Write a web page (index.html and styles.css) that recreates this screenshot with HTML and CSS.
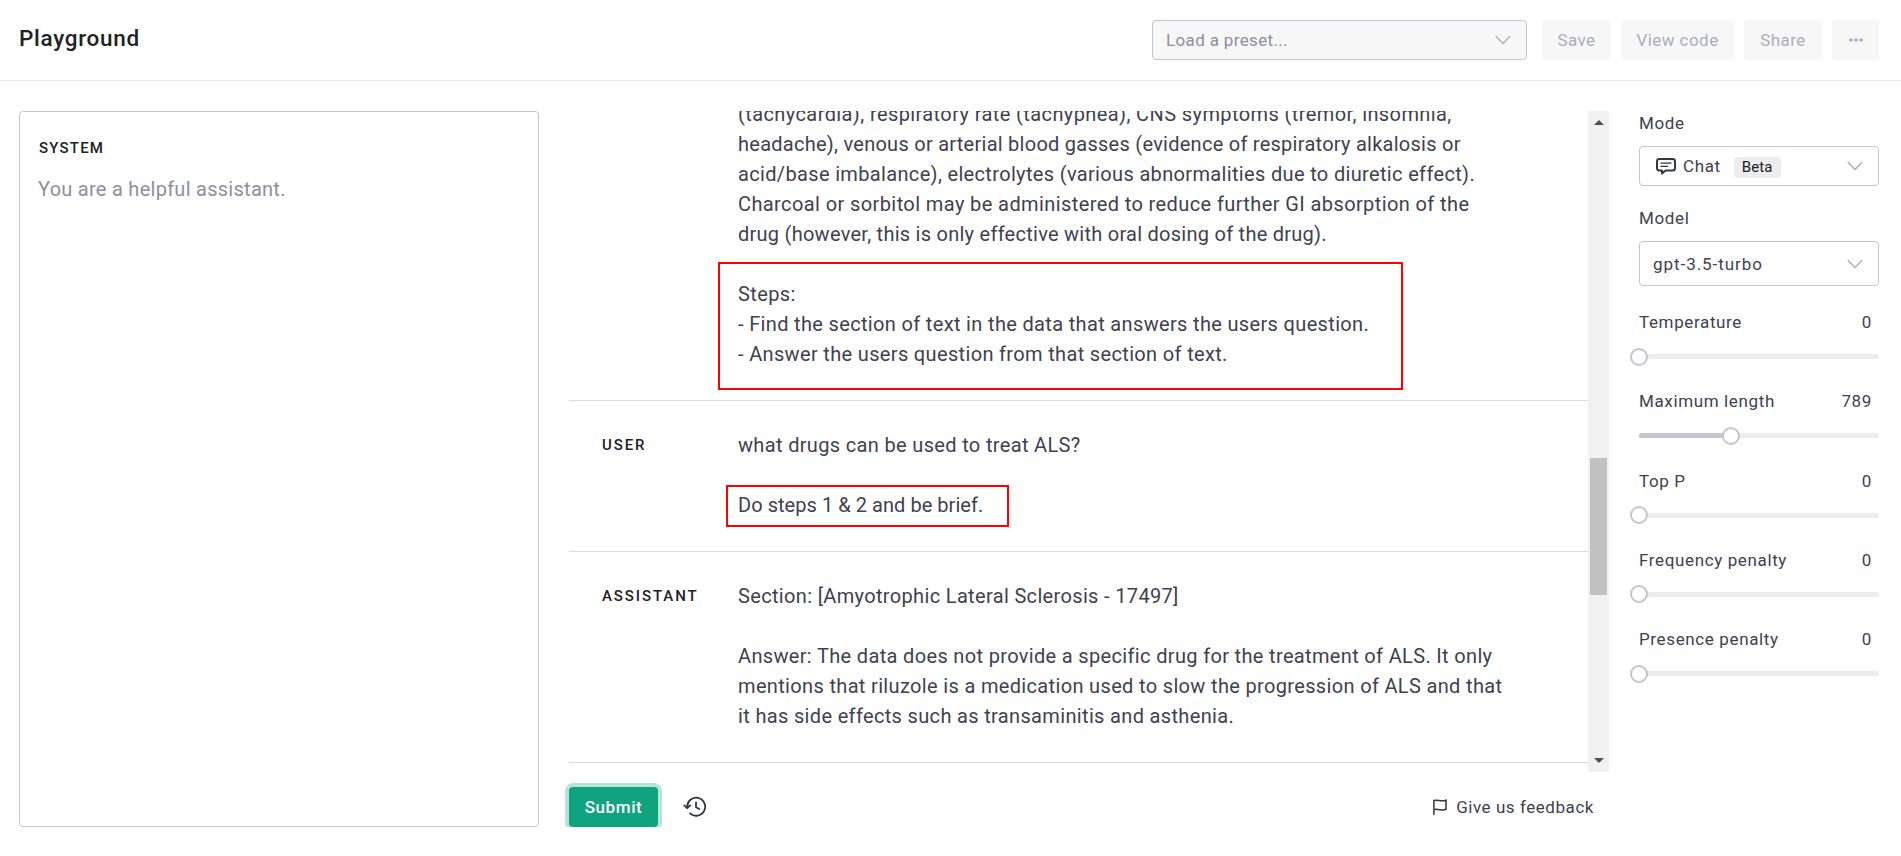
FILE: index.html
```html
<!DOCTYPE html>
<html lang="en">
<head>
  <meta charset="UTF-8">
  <title>Playground</title>
  <link rel="stylesheet" href="styles.css">
</head>
<body>
  <header class="header">
    <h1 class="title">Playground</h1>
    <div class="preset">
      <span>Load a preset...</span>
      <svg class="chevron" viewBox="0 0 16 10"><path d="M0.7 1 L8 8.5 L15.3 1"/></svg>
    </div>
    <button class="button save">Save</button>
    <button class="button view-code">View code</button>
    <button class="button share">Share</button>
    <button class="button more">
      <svg width="14" height="4" viewBox="0 0 14 4"><circle cx="2" cy="2" r="1.8"/><circle cx="7" cy="2" r="1.8"/><circle cx="12" cy="2" r="1.8"/></svg>
    </button>
  </header>

  <main class="main">
    <section class="system">
      <h2 class="role">SYSTEM</h2>
      <p class="placeholder">You are a helpful assistant.</p>
    </section>

    <section class="chat">
      <div class="chat-scroll">
        <div class="messages">
          <div class="message first">
            <div class="role"></div>
            <div class="text">
              <span class="wide">(tachycardia), respiratory rate (tachyphea), CNS symptoms (tremor, insomnia,</span><br>
              <span class="tight">headache), venous or arterial blood gasses (evidence of respiratory alkalosis or</span><br>
              <span>acid/base imbalance), electrolytes (various abnormalities due to diuretic effect).</span><br>
              <span class="wide">Charcoal or sorbitol may be administered to reduce further GI absorption of the</span><br>
              <span class="tight">drug (however, this is only effective with oral dosing of the drug).</span><br>
              <br>
              <div class="marked">
                <span class="wide">Steps:</span><br>
                <span>- Find the section of text in the data that answers the users question.</span><br>
                <span>- Answer the users question from that section of text.</span>
                <div class="mark mark-steps"></div>
              </div>
            </div>
          </div>
          <div class="message">
            <div class="role">USER</div>
            <div class="text">
              <span>what drugs can be used to treat ALS?</span><br>
              <br>
              <div class="marked">
                <span class="tighter">Do steps 1 &amp; 2 and be brief.</span>
                <div class="mark mark-brief"></div>
              </div>
            </div>
          </div>
          <div class="message">
            <div class="role">ASSISTANT</div>
            <div class="text">
              <span>Section: [Amyotrophic Lateral Sclerosis - 17497]</span><br>
              <br>
              <span>Answer: The data does not provide a specific drug for the treatment of ALS. It only</span><br>
              <span>mentions that riluzole is a medication used to slow the progression of ALS and that</span><br>
              <span>it has side effects such as transaminitis and asthenia.</span>
            </div>
          </div>
        </div>
        <div class="scrollbar">
          <svg width="10" height="5" viewBox="0 0 10 5"><path d="M0 5 L5 0 L10 5Z"/></svg>
          <div class="scroll-thumb"></div>
          <svg width="10" height="5" viewBox="0 0 10 5"><path d="M0 0 L5 5 L10 0Z"/></svg>
        </div>
      </div>
      <div class="footer">
        <button class="submit">Submit</button>
        <svg class="history" width="24" height="22" viewBox="0 0 24 22">
          <path d="M4.2 11.5 A9 9 0 1 1 7 17.3"/>
          <path d="M1.3 9.4 L4.2 12.2 L7.2 9.4"/>
          <path d="M13 6.3 V11.2 L16.2 13"/>
        </svg>
        <a class="feedback">
          <svg width="14" height="16" viewBox="0 0 14 16"><path d="M0.9 16 V1.5 C5 0 7.5 3.3 13 1.2 V10.3 C8 12.5 5 9 0.9 10.8"/></svg>
          <span>Give us feedback</span>
        </a>
      </div>
    </section>

    <aside class="settings">
      <div class="label">Mode</div>
      <div class="select mode">
        <svg class="chat-icon" width="20" height="17" viewBox="0 0 20 17">
          <path d="M3.4 1 H16.6 Q19 1 19 3.4 V10 Q19 12.5 16.6 12.5 H9.6 L6 15.6 V12.5 H3.4 Q1 12.5 1 10 V3.4 Q1 1 3.4 1Z"/>
          <path class="thin" d="M4.5 5.2 H15.5 M4.5 8.4 H12"/>
        </svg>
        <span>Chat</span>
        <span class="badge">Beta</span>
        <svg class="chevron" viewBox="0 0 16 10"><path d="M0.7 1 L8 8.5 L15.3 1"/></svg>
      </div>
      <div class="label">Model</div>
      <div class="select model">
        <span>gpt-3.5-turbo</span>
        <svg class="chevron" viewBox="0 0 16 10"><path d="M0.7 1 L8 8.5 L15.3 1"/></svg>
      </div>

      <div class="slider">
        <div class="slider-head"><span>Temperature</span><span>0</span></div>
        <div class="track"><div class="fill" style="width: 0"></div><div class="knob"></div></div>
      </div>
      <div class="slider">
        <div class="slider-head"><span>Maximum length</span><span>789</span></div>
        <div class="track"><div class="fill" style="width: 38.5%"></div><div class="knob"></div></div>
      </div>
      <div class="slider">
        <div class="slider-head"><span>Top P</span><span>0</span></div>
        <div class="track"><div class="fill" style="width: 0"></div><div class="knob"></div></div>
      </div>
      <div class="slider">
        <div class="slider-head"><span>Frequency penalty</span><span>0</span></div>
        <div class="track"><div class="fill" style="width: 0"></div><div class="knob"></div></div>
      </div>
      <div class="slider">
        <div class="slider-head"><span>Presence penalty</span><span>0</span></div>
        <div class="track"><div class="fill" style="width: 0"></div><div class="knob"></div></div>
      </div>
    </aside>
  </main>
</body>
</html>
```
FILE: styles.css
```css
* {
  box-sizing: border-box;
}
body {
  margin: 0;
  font-family: Roboto, "Liberation Sans", sans-serif;
  color: #40414f;
  background-color: #fff;
  overflow: hidden;
}
svg {
  display: block;
  flex: none;
}
.header {
  display: flex;
  align-items: center;
  height: 81px;
  padding: 0 22px 0 19px;
  border-bottom: 1px solid #ececf1;
}
.title {
  flex: 1;
  margin: 0 0 4px;
  font-size: 22.5px;
  font-weight: 500;
  letter-spacing: 0.7px;
  color: #202123;
}
.preset {
  display: flex;
  align-items: center;
  justify-content: space-between;
  width: 375px;
  height: 40px;
  margin-right: 15px;
  padding: 0 15px 0 13px;
  border: 1px solid #c5c5d2;
  border-radius: 4px;
  background-color: #f7f7f8;
  color: #8e8ea0;
  font-size: 17px;
  letter-spacing: 0.35px;
}
.chevron {
  width: 16px;
  height: 10px;
  fill: none;
  stroke: #acacbe;
  stroke-width: 1.3;
}
.button {
  display: flex;
  align-items: center;
  justify-content: center;
  height: 40px;
  margin: 0 10px 0 0;
  padding: 0;
  border: none;
  border-radius: 4px;
  background-color: #f7f7f8;
  color: #acacbe;
  font-family: inherit;
  font-size: 17px;
  letter-spacing: 0.45px;
}
.button svg {
  fill: #acacbe;
}
.save {
  width: 69px;
}
.view-code {
  width: 113px;
}
.share {
  width: 78px;
}
.more {
  width: 47px;
  margin-right: 0;
}

.main {
  display: flex;
  height: 746px;
  padding: 30px 22px 0 19px;
}
.system {
  width: 520px;
  padding: 26px 18px;
  border: 1px solid #c5c5d2;
  border-radius: 4px;
}
.role {
  margin: 0;
  font-size: 15px;
  font-weight: 500;
  line-height: 20px;
  letter-spacing: 1.9px;
  color: #202123;
}
.system .role {
  padding-left: 1px;
  letter-spacing: 1.2px;
}
.placeholder {
  margin: 16px 0 0;
  font-size: 20px;
  line-height: 30px;
  letter-spacing: 0.27px;
  color: #8e8ea0;
}

.chat {
  width: 1040px;
  margin-left: 30px;
}
.chat-scroll {
  display: flex;
  height: 661px;
  overflow: hidden;
}
.messages {
  flex: 1;
}
.message {
  display: flex;
  padding: 29px 0 31px 33px;
  border-bottom: 1px solid #d9d9e3;
}
.message.first {
  margin-top: -12px;
  padding-top: 0;
}
.message .role {
  width: 136px;
  padding-top: 5px;
}
.text {
  font-size: 20px;
  line-height: 30px;
  letter-spacing: 0.34px;
  white-space: nowrap;
}
.wide {
  letter-spacing: 0.4px;
}
.tight {
  letter-spacing: 0.26px;
}
.tighter {
  letter-spacing: 0.05px;
}
.marked {
  position: relative;
}
/* red outlines drawn over the messages */
.mark {
  position: absolute;
  border: 2px solid #f00;
}
.mark-steps {
  top: -17px;
  left: -20px;
  width: 685px;
  height: 128px;
}
.mark-brief {
  top: -5px;
  left: -12px;
  width: 283px;
  height: 42px;
}
.scrollbar {
  display: flex;
  flex-direction: column;
  align-items: center;
  width: 21px;
  padding: 9px 0;
  background-color: #f1f1f1;
}
.scrollbar svg {
  fill: #505050;
}
.scroll-thumb {
  width: 17px;
  height: 137px;
  margin: 333px 0 auto;
  background-color: #c1c1c1;
}

.footer {
  display: flex;
  align-items: center;
  height: 55px;
  margin-left: -4px;
  padding: 15px 15px 0 4px;
  overflow: hidden;
}
.submit {
  width: 89px;
  height: 40px;
  margin-right: 25px;
  padding: 0;
  border: none;
  border-radius: 4px;
  background-color: #10a37f;
  box-shadow: 0 0 0 4px #b7e3d8;
  color: #fff;
  font-family: inherit;
  font-size: 17px;
  font-weight: 500;
  letter-spacing: 0.6px;
}
.history {
  fill: none;
  stroke: #353740;
  stroke-width: 1.8;
  stroke-linecap: round;
  stroke-linejoin: round;
}
.feedback {
  display: flex;
  align-items: center;
  gap: 9px;
  margin-left: auto;
  font-size: 17px;
  letter-spacing: 0.55px;
}
.feedback svg {
  fill: none;
  stroke: #353740;
  stroke-width: 1.5;
}

.settings {
  width: 240px;
  margin-left: 30px;
  font-size: 17px;
  letter-spacing: 0.63px;
}
.label {
  height: 35px;
  line-height: 24px;
}
.select {
  display: flex;
  align-items: center;
  padding: 0 15px 0 13px;
  border: 1px solid #c5c5d2;
  border-radius: 4px;
}
.select .chevron {
  margin-left: auto;
}
.mode {
  height: 40px;
  margin-bottom: 20px;
  padding-left: 16px;
}
.model {
  height: 45px;
  letter-spacing: 0.95px;
}
.chat-icon {
  margin-right: 7px;
  fill: none;
  stroke: #353740;
  stroke-width: 2;
  stroke-linejoin: round;
}
.chat-icon .thin {
  stroke-width: 1.3;
}
.badge {
  height: 21px;
  margin: 2px 0 0 13px;
  padding: 0 8px;
  border-radius: 4px;
  background-color: #ececf1;
  color: #202123;
  font-size: 15px;
  line-height: 20px;
  letter-spacing: 0.1px;
}
.slider {
  height: 79.3px;
  padding-top: 24px;
}
.slider-head {
  display: flex;
  justify-content: space-between;
  padding-right: 7px;
  line-height: 24px;
}
.track {
  display: flex;
  align-items: center;
  height: 5px;
  margin-top: 20px;
  border-radius: 3px;
  background-color: #ececf1;
}
.fill {
  height: 5px;
  border-radius: 3px 0 0 3px;
  background-color: #c5c5d2;
}
.knob {
  flex: none;
  width: 18px;
  height: 18px;
  margin-left: -9px;
  border: 2px solid #c5c5d2;
  border-radius: 50%;
  background-color: #fff;
}
```
